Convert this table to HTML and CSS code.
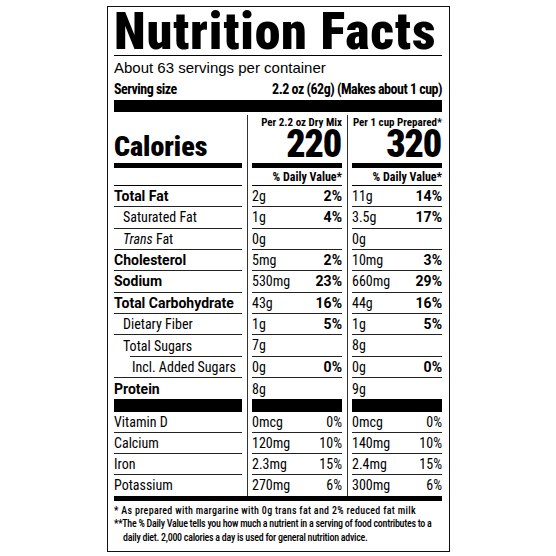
FILE: index.html
```html
<!DOCTYPE html>
<html lang="en">
<head>
<meta charset="utf-8">
<title>Nutrition Facts</title>
<link rel="stylesheet" href="styles.css">
</head>
<body>
<div class="label">
  <h1 class="title">Nutrition Facts</h1>
  <p class="servings">About 63 servings per container</p>
  <div class="serving-size"><span>Serving size</span><span>2.2 oz (62g) (Makes about 1 cup)</span></div>
  <div class="bar-top"></div>

  <div class="table">
    <div class="divider d1"></div>
    <div class="divider d2"></div>

    <div class="row cal">
      <div class="cell c1 cal-label">Calories</div>
      <div class="cell c2 cal-val"><span class="per">Per 2.2 oz Dry Mix</span><span class="big">220</span></div>
      <div class="cell c3 cal-val"><span class="per">Per 1 cup Prepared*</span><span class="big">320</span></div>
    </div>

    <div class="row dv">
      <div class="cell c1"></div>
      <div class="cell c2">% Daily Value*</div>
      <div class="cell c3">% Daily Value*</div>
    </div>

    <div class="row nut main">
      <div class="cell c1 name">Total Fat</div>
      <div class="cell c2"><span>2g</span><b>2%</b></div>
      <div class="cell c3"><span>11g</span><b>14%</b></div>
    </div>
    <div class="row nut sub">
      <div class="cell c1 name">Saturated Fat</div>
      <div class="cell c2"><span>1g</span><b>4%</b></div>
      <div class="cell c3"><span>3.5g</span><b>17%</b></div>
    </div>
    <div class="row nut sub">
      <div class="cell c1 name"><span><i>Trans</i> Fat</span></div>
      <div class="cell c2"><span>0g</span></div>
      <div class="cell c3"><span>0g</span></div>
    </div>
    <div class="row nut main">
      <div class="cell c1 name">Cholesterol</div>
      <div class="cell c2"><span>5mg</span><b>2%</b></div>
      <div class="cell c3"><span>10mg</span><b>3%</b></div>
    </div>
    <div class="row nut main">
      <div class="cell c1 name">Sodium</div>
      <div class="cell c2"><span>530mg</span><b>23%</b></div>
      <div class="cell c3"><span>660mg</span><b>29%</b></div>
    </div>
    <div class="row nut main">
      <div class="cell c1 name">Total Carbohydrate</div>
      <div class="cell c2"><span>43g</span><b>16%</b></div>
      <div class="cell c3"><span>44g</span><b>16%</b></div>
    </div>
    <div class="row nut sub">
      <div class="cell c1 name">Dietary Fiber</div>
      <div class="cell c2"><span>1g</span><b>5%</b></div>
      <div class="cell c3"><span>1g</span><b>5%</b></div>
    </div>
    <div class="row nut sub short-line">
      <div class="cell c1 name">Total Sugars</div>
      <div class="cell c2"><span>7g</span></div>
      <div class="cell c3"><span>8g</span></div>
    </div>
    <div class="row nut subsub">
      <div class="cell c1 name">Incl. Added Sugars</div>
      <div class="cell c2"><span>0g</span><b>0%</b></div>
      <div class="cell c3"><span>0g</span><b>0%</b></div>
    </div>
    <div class="row nut main last">
      <div class="cell c1 name">Protein</div>
      <div class="cell c2"><span>8g</span></div>
      <div class="cell c3"><span>9g</span></div>
    </div>

    <div class="row vbar">
      <div class="cell c1"></div>
      <div class="cell c2"></div>
      <div class="cell c3"></div>
    </div>

    <div class="row nut vit">
      <div class="cell c1 name">Vitamin D</div>
      <div class="cell c2"><span>0mcg</span><span>0%</span></div>
      <div class="cell c3"><span>0mcg</span><span>0%</span></div>
    </div>
    <div class="row nut vit">
      <div class="cell c1 name">Calcium</div>
      <div class="cell c2"><span>120mg</span><span>10%</span></div>
      <div class="cell c3"><span>140mg</span><span>10%</span></div>
    </div>
    <div class="row nut vit">
      <div class="cell c1 name">Iron</div>
      <div class="cell c2"><span>2.3mg</span><span>15%</span></div>
      <div class="cell c3"><span>2.4mg</span><span>15%</span></div>
    </div>
    <div class="row nut vit last">
      <div class="cell c1 name">Potassium</div>
      <div class="cell c2"><span>270mg</span><span>6%</span></div>
      <div class="cell c3"><span>300mg</span><span>6%</span></div>
    </div>
  </div>

  <div class="bar-bottom"></div>

  <div class="foot">
    <p class="first">* As prepared with margarine with 0g trans fat and 2% reduced fat milk</p>
    <p class="hang">**The % Daily Value tells you how much a nutrient in a serving of food contributes to a<br>daily diet. 2,000 calories a day is used for general nutrition advice.</p>
  </div>
</div>
</body>
</html>
```
FILE: styles.css
```css
* { box-sizing: border-box; }
html, body { margin: 0; padding: 0; background: #fff; }
body {
  font-family: Roboto, "Liberation Sans", sans-serif;
  color: #000;
}

.label {
  margin: 6px 0 0 107px;
  width: 343px;
  height: 546px;
  border: 1px solid #111;
  padding: 0 7px 0 6px;
}

.title {
  margin: 0;
  padding-top: 2px;
  height: 49px;
  line-height: 46px;
  font-size: 52px;
  font-weight: 900;
  font-stretch: 84%;
  letter-spacing: 0.8px;
  border-bottom: 1px solid #000;
  white-space: nowrap;
}

.servings {
  margin: 0;
  padding-top: 3px;
  line-height: 18px;
  font-family: "Liberation Sans", Arial, sans-serif;
  font-size: 15px;
}

.serving-size {
  display: flex;
  justify-content: space-between;
  padding-top: 3px;
  line-height: 18px;
  font-size: 14px;
  font-weight: 700;
  font-stretch: 75%;
  letter-spacing: -0.5px;
  white-space: nowrap;
}

.bar-top {
  margin-top: 2px;
  height: 12px;
  background: #000;
}

.table {
  display: grid;
  grid-template-columns: 128px 10px 90px 10px 90px;
}

.row { display: contents; }

.divider {
  grid-row: 1 / span 17;
  margin: 3px 0 0 5px;
  width: 1px;
  background: #333;
}
.d1 { grid-column: 2; }
.d2 { grid-column: 4; }

.c1 { grid-column: 1; }
.c2 { grid-column: 3; }
.c3 { grid-column: 5; }

/* Calories row */
.cal .cell {
  height: 56px;
  border-bottom: 5px solid #000;
}
.cal-label {
  display: flex;
  align-items: flex-end;
  padding-bottom: 1px;
  line-height: 30px;
  font-size: 28px;
  font-weight: 900;
  font-stretch: 78%;
}
.cal-val {
  display: flex;
  flex-direction: column;
  align-items: flex-end;
  justify-content: flex-end;
  padding-bottom: 3px;
  font-weight: 700;
}
.per {
  line-height: 12px;
  font-size: 11px;
  font-stretch: 76%;
  white-space: nowrap;
}
.big {
  line-height: 31px;
  font-size: 38px;
  font-weight: 900;
  font-stretch: 75%;
  letter-spacing: -1.2px;
  margin-right: 1px;
}

/* % Daily Value row */
.dv .cell {
  height: 18px;
  padding-top: 2px;
  line-height: 15px;
  font-size: 12px;
  font-weight: 700;
  font-stretch: 77%;
  text-align: right;
  border-bottom: 1px solid #000;
}

/* Nutrient rows */
.nut .cell {
  height: 21.33px;
  display: flex;
  justify-content: space-between;
  align-items: center;
  line-height: 20px;
  font-size: 14px;
  font-stretch: 83%;
  border-bottom: 1px solid #222;
  white-space: nowrap;
}
.nut .cell b {
  font-weight: 700;
  font-stretch: 95%;
}
.nut.last .cell { border-bottom: 0; }
.main .name { font-weight: 700; font-stretch: 88%; }
.sub .name { padding-left: 9px; }
.subsub .name { padding-left: 18px; }
.short-line .c1 {
  border-bottom: 0;
  background: linear-gradient(#222, #222) no-repeat right bottom / calc(100% - 16px) 1px;
}
.nut .cell i { font-style: italic; }

.vit .cell { height: 21px; }

.vbar .cell {
  height: 12.7px;
  background: #000;
}

.bar-bottom {
  height: 5px;
  background: #000;
}

.foot {
  padding-top: 3px;
  font-size: 10px;
  line-height: 13.5px;
  font-weight: 500;
  font-stretch: 75%;
  letter-spacing: -0.28px;
}
.foot p { margin: 0; white-space: nowrap; }
.foot .first { letter-spacing: 0.3px; }
.foot .hang {
  padding-left: 9px;
  text-indent: -9px;
}
```
